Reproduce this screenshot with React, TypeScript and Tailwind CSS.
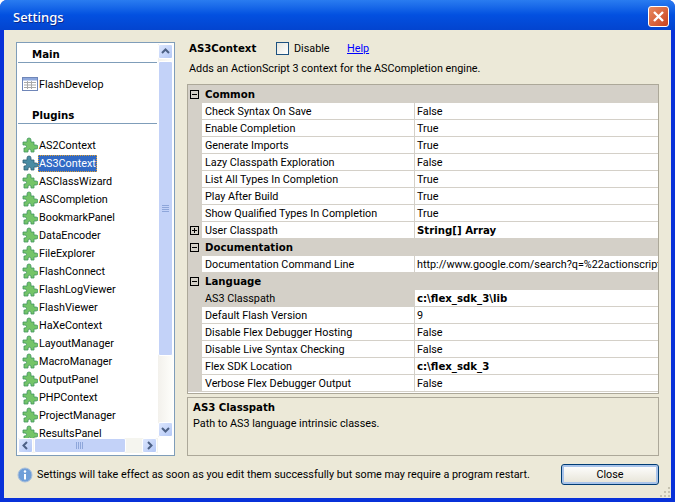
import { ReactNode } from "react";

const plugins = ["AS2Context", "AS3Context", "ASClassWizard", "ASCompletion", "BookmarkPanel", "DataEncoder", "FileExplorer", "FlashConnect", "FlashLogViewer", "FlashViewer", "HaXeContext", "LayoutManager", "MacroManager", "OutputPanel", "PHPContext", "ProjectManager", "ResultsPanel"];

type Row = { name: string; value: string; bold?: boolean; expand?: boolean; selected?: boolean };
type Group = { title: string; rows: Row[] };

const groups: Group[] = [
  {
    title: "Common",
    rows: [
      { name: "Check Syntax On Save", value: "False" },
      { name: "Enable Completion", value: "True" },
      { name: "Generate Imports", value: "True" },
      { name: "Lazy Classpath Exploration", value: "False" },
      { name: "List All Types In Completion", value: "True" },
      { name: "Play After Build", value: "True" },
      { name: "Show Qualified Types In Completion", value: "True" },
      { name: "User Classpath", value: "String[] Array", bold: true, expand: true },
    ],
  },
  {
    title: "Documentation",
    rows: [{ name: "Documentation Command Line", value: "http://www.google.com/search?q=%22actionscript+3%22" }],
  },
  {
    title: "Language",
    rows: [
      { name: "AS3 Classpath", value: "c:\\flex_sdk_3\\lib", bold: true, selected: true },
      { name: "Default Flash Version", value: "9" },
      { name: "Disable Flex Debugger Hosting", value: "False" },
      { name: "Disable Live Syntax Checking", value: "False" },
      { name: "Flex SDK Location", value: "c:\\flex_sdk_3", bold: true },
      { name: "Verbose Flex Debugger Output", value: "False" },
    ],
  },
];

const boldFont = "font-['DejaVu_Sans',sans-serif] font-bold text-[10.2px]";

function Puzzle({ active }: { active?: boolean }) {
  const fill = active ? "#4a8ca3" : "#74c468";
  const stroke = active ? "#2f6075" : "#3f9460";
  return (
    <svg width="16" height="16" viewBox="0 0 16 16" className="shrink-0">
      <path d="M1 5h4V3a2 2 0 0 1 4 0v2h3v3h2a2 2 0 0 1 0 4h-2v3H9v-2a2 2 0 0 0-3 0v2H2v-4h1a1.5 1.5 0 0 0 0-3H1z" fill={fill} stroke={stroke} strokeWidth="0.8" />
    </svg>
  );
}

function ScrollBtn({ dir }: { dir: "up" | "down" | "left" | "right" }) {
  const pts = { up: "4,9 7.5,5.5 11,9", down: "4,6 7.5,9.5 11,6", left: "9,4 5.5,7.5 9,11", right: "6,4 9.5,7.5 6,11" }[dir];
  return (
    <div className="w-[15px] h-[15px] shrink-0 flex items-center justify-center rounded-[2px] border border-white bg-gradient-to-br from-[#dce6fd] to-[#b4c8f6]">
      <svg width="15" height="15" viewBox="0 0 15 15" className="shrink-0">
        <polyline points={pts} fill="none" stroke="#4d6185" strokeWidth="2" />
      </svg>
    </div>
  );
}

function Expander({ open }: { open: boolean }) {
  return (
    <div className="w-[9px] h-[9px] border border-black flex items-center justify-center relative">
      <div className="w-[5px] h-px bg-black" />
      {!open && <div className="absolute w-px h-[5px] bg-black" />}
    </div>
  );
}

function SectionHead({ children }: { children: ReactNode }) {
  return (
    <div className={`h-[19px] mr-[1px] border-b border-[#7f9db9] pl-[14px] leading-[21px] ${boldFont}`}>{children}</div>
  );
}

function PluginItem({ name }: { name: string }) {
  const active = name === "AS3Context";
  return (
    <div className="h-[18px] flex items-center pl-[4px] shrink-0">
      <Puzzle active={active} />
      <span className={active ? "h-[17px] px-[1px] leading-[17px] bg-[#316ac5] text-white outline-1 outline-dotted outline-[#e0a030] -outline-offset-1" : "px-[1px] pt-[2px]"}>{name}</span>
    </div>
  );
}

export default function App() {
  return (
    <div className="w-[675px] h-[502px] flex flex-col overflow-hidden rounded-t-[7px] bg-[#0831d9] text-[10.8px] text-black font-['Roboto',sans-serif]">
      <div className="h-[30px] shrink-0 flex items-center justify-between pl-[13px] pr-[6px] bg-gradient-to-b from-[#2a7cf0] via-[#0350e0] to-[#0344cf]">
        <span className="text-white text-[13px] pt-[6px] font-medium font-['Noto_Sans',sans-serif] [text-shadow:1px_1px_0_#0b2a8c]">Settings</span>
        <div className="w-[21px] h-[21px] mt-[3px] rounded-[3px] border border-white bg-gradient-to-br from-[#e88a60] to-[#c8401a] flex items-center justify-center">
          <svg width="13" height="13" viewBox="0 0 13 13">
            <path d="M2 2l9 9M11 2l-9 9" stroke="#fff" strokeWidth="2.4" />
          </svg>
        </div>
      </div>

      <div className="flex-1 mx-[4px] mb-[4px] bg-[#ece9d8] flex flex-col min-h-0 relative">
        <div className="flex gap-[12px] pl-[12px] pr-[12px] pt-[12px]">
          <div className="w-[159px] h-[414px] shrink-0 border border-[#7f9db9] bg-white pt-[1px] pl-[1px] pr-[1px] pb-[2px] flex">
            <div className="flex-1 min-w-0 flex flex-col">
              <div className="flex-1 min-h-0 overflow-hidden flex flex-col">
                <SectionHead>Main</SectionHead>
                <div className="h-[18px] flex items-center pl-[4px] mt-[12px] shrink-0">
                  <svg width="16" height="16" viewBox="0 0 16 16" className="shrink-0">
                    <rect x="0.5" y="1.5" width="15" height="13" fill="#fff" stroke="#6f86b8" />
                    <rect x="1" y="2" width="14" height="2.5" fill="#8fa8dc" />
                    <path d="M2 6.5h12M2 9h12M2 11.500h12M5.500 5v8M9.500 5v8" stroke="#a9a9a9" />
                  </svg>
                  <span className="px-[1px] pt-[2px]">FlashDevelop</span>
                </div>
                <div className="mt-[12px]">
                  <SectionHead>Plugins</SectionHead>
                </div>
                <div className="flex flex-col mt-[12px]">
                  {plugins.map((p) => (
                    <PluginItem key={p} name={p} />
                  ))}
                </div>
              </div>
              <div className="h-[15px] shrink-0 flex bg-[#f5f5ef] pr-[1px]">
                <ScrollBtn dir="left" />
                <div className="flex-1 mx-[1px] rounded-[2px] border border-white bg-[#c3d2f8] flex items-center justify-center">
                  <svg width="8" height="7" viewBox="0 0 8 7">
                    <path d="M.5 0v7M2.500 0v7M4.500 0v7M6.500 0v7" stroke="#8ea6da" />
                  </svg>
                </div>
                <div className="w-[15px]" />
                <ScrollBtn dir="right" />
              </div>
            </div>
            <div className="w-[15px] shrink-0 flex flex-col bg-gradient-to-r from-[#f3f1ec] to-[#fefefb] h-[393px]">
              <ScrollBtn dir="up" />
              <div className="h-[2px]" />
              <div className="h-[295px] rounded-[2px] border border-white bg-[#c3d2f8] flex items-center justify-center">
                <svg width="7" height="8" viewBox="0 0 7 8">
                  <path d="M0 .5h7M0 2.500h7M0 4.500h7M0 6.500h7" stroke="#8ea6da" />
                </svg>
              </div>
              <div className="flex-1" />
              <ScrollBtn dir="down" />
            </div>
          </div>

          <div className="flex-1 min-w-0 flex flex-col">
            <div className="h-[13px] flex items-center pl-[2px]">
              <span className={`w-[87px] ${boldFont}`}>AS3Context</span>
              <div className="w-[13px] h-[13px] border border-[#1c5180] bg-gradient-to-br from-[#e6e6dd] to-white" />
              <span className="ml-[5px] w-[53px] pt-[2px]">Disable</span>
              <span className="text-[#0000ff] underline pt-[2px]">Help</span>
            </div>
            <div className="mt-[6px] h-[15px] leading-[15px] pl-[2px]">Adds an ActionScript 3 context for the ASCompletion engine.</div>

            <div className="mt-[8px] h-[310px] border border-[#aca899] bg-white overflow-hidden">
              {groups.map((g) => (
                <div key={g.title} className="first:pt-[1px] first:bg-[#d4d0c8]">
                  <div className="h-[17px] bg-[#d4d0c8] flex items-center">
                    <div className="w-[17px] shrink-0 pl-[2px]">
                      <Expander open />
                    </div>
                    <span className={boldFont}>{g.title}</span>
                  </div>
                  {g.rows.map((r) => (
                    <div key={r.name} className="h-[17px] flex bg-white">
                      <div className="w-[14px] shrink-0 bg-[#d4d0c8] flex items-center pl-[2px]">
                        {r.expand && <Expander open={false} />}
                      </div>
                      <div className={`w-[213px] shrink-0 pl-[3px] border-b border-r border-[#d4d0c8] leading-[17px] whitespace-nowrap ${r.selected ? "bg-[#d4d0c8]" : ""}`}>{r.name}</div>
                      <div className={`flex-1 min-w-0 pl-[2px] border-b border-[#d4d0c8] leading-[17px] whitespace-nowrap overflow-hidden ${r.bold ? boldFont : ""}`}>{r.value}</div>
                    </div>
                  ))}
                </div>
              ))}
            </div>

            <div className="mt-[3px] h-[59px] border border-[#aca899] px-[5px] pt-[2px]">
              <div className={`leading-[16px] ${boldFont}`}>AS3 Classpath</div>
              <div className="leading-[16px]">Path to AS3 language intrinsic classes.</div>
            </div>
          </div>
        </div>

        <div className="flex items-center pl-[13px] pr-[12px] mt-[8px]">
          <svg width="16" height="16" viewBox="0 0 16 16" className="shrink-0">
            <circle cx="8" cy="8" r="7" fill="#6f9ed8" stroke="#a9c0dc" />
            <circle cx="8" cy="4.500" r="1.200" fill="#fff" />
            <rect x="7" y="7" width="2" height="5.500" fill="#fff" />
          </svg>
          <span className="ml-[4px] flex-1 whitespace-nowrap pt-[2px]">Settings will take effect as soon as you edit them successfully but some may require a program restart.</span>
          <div className="w-[98px] h-[21px] pt-[1px] rounded-[3px] border border-[#003c74] shadow-[inset_0_0_0_2px_#a9c4ea] bg-gradient-to-b from-white to-[#e6e3d6] flex items-center justify-center">Close</div>
        </div>

        <svg width="12" height="12" viewBox="0 0 12 12" className="absolute right-0 bottom-0">
          <path d="M9 1h2v2H9zM5 5h2v2H5zM9 5h2v2H9zM1 9h2v2H1zM5 9h2v2H5zM9 9h2v2H9z" fill="#c5c2b0" />
        </svg>
      </div>
    </div>
  );
}
